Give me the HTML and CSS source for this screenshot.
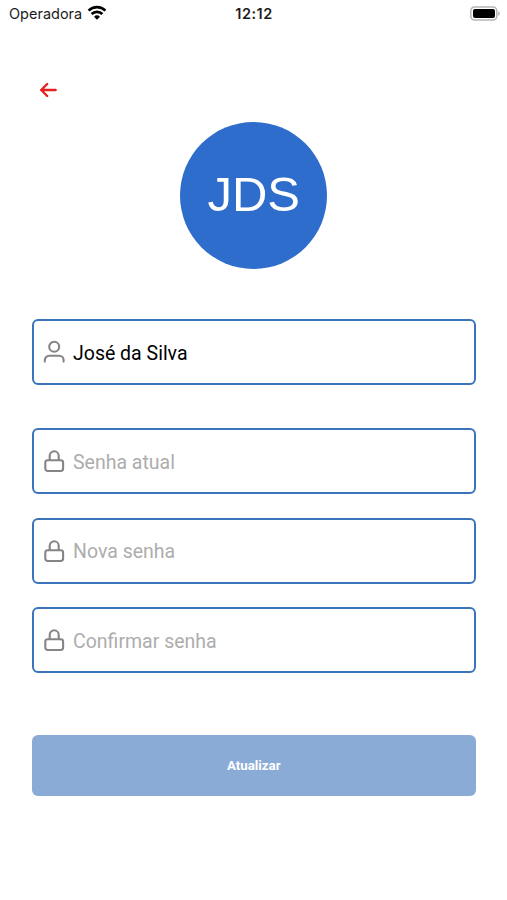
FILE: index.html
```html
<!DOCTYPE html>
<html lang="pt-BR">
  <head>
    <meta charset="UTF-8" />
    <meta name="viewport" content="width=device-width, initial-scale=1.0" />
    <title>Perfil</title>
    <link rel="stylesheet" href="styles.css">
  </head>
  <body>
    <header class="status-bar">
      <div class="carrier">
        <span class="carrier__name">Operadora</span>
        <svg class="wifi" width="20" height="16" viewBox="0 0 20 16" fill="none" stroke="#000" stroke-width="2.7">
          <path d="M1.6 5.6a12 12 0 0 1 16.8 0" />
          <path d="M4.6 9a7.7 7.7 0 0 1 10.8 0" />
          <path d="M10 14.7 7 11.8a4.3 4.3 0 0 1 6 0z" fill="#000" stroke="none" />
        </svg>
      </div>
      <span class="time">12:12</span>
      <svg class="battery" width="32" height="16" viewBox="0 0 32 16">
        <rect x="1.8" y="1" width="26" height="13" rx="3.8" fill="#fff" stroke="#b5b5b5" stroke-width="1.5" />
        <rect x="4" y="3" width="22" height="9" rx="2" fill="#000" />
        <path d="M29.2 5.2c2.2.8 2.2 3.8 0 4.6z" fill="#b5b5b5" />
      </svg>
    </header>

    <main class="container">
      <a class="back" href="#" aria-label="Voltar">
        <svg width="18" height="16" viewBox="0 0 18 16" fill="none" stroke="#e5201e" stroke-width="2.4" stroke-linecap="round" stroke-linejoin="round">
          <path d="M16.6 8H2.2M8.2 2 2.2 8l6 6" />
        </svg>
      </a>

      <div class="avatar">JDS</div>

      <form class="profile-form" onsubmit="return false;">
        <label class="field field--name">
          <svg class="field__icon" width="24" height="24" viewBox="0 0 24 24">
            <circle cx="12.2" cy="6.7" r="5" />
            <path d="M2.8 21.6v-1.4a4.5 4.5 0 0 1 4.5-4.5h9.8a4.5 4.5 0 0 1 4.5 4.5v1.4" />
          </svg>
          <input type="text" value="José da Silva" />
        </label>
        <label class="field">
          <svg class="field__icon" width="24" height="24" viewBox="0 0 24 24">
            <rect x="3.3" y="11.3" width="17.8" height="10.7" rx="2.4" />
            <path d="M7.7 11V6.8a4.5 4.5 0 0 1 9 0V11" />
          </svg>
          <input type="password" placeholder="Senha atual" />
        </label>
        <label class="field">
          <svg class="field__icon" width="24" height="24" viewBox="0 0 24 24">
            <rect x="3.3" y="11.3" width="17.8" height="10.7" rx="2.4" />
            <path d="M7.7 11V6.8a4.5 4.5 0 0 1 9 0V11" />
          </svg>
          <input type="password" placeholder="Nova senha" />
        </label>
        <label class="field">
          <svg class="field__icon" width="24" height="24" viewBox="0 0 24 24">
            <rect x="3.3" y="11.3" width="17.8" height="10.7" rx="2.4" />
            <path d="M7.7 11V6.8a4.5 4.5 0 0 1 9 0V11" />
          </svg>
          <input type="password" placeholder="Confirmar senha" />
        </label>
        <button class="submit" type="submit">Atualizar</button>
      </form>
    </main>
  </body>
</html>
```
FILE: styles.css
```css
* {
  box-sizing: border-box;
}
body {
  font-family: Roboto, Arial, sans-serif;
  margin: 0;
  min-height: 900px;
  background: #fff;
}
.status-bar {
  display: grid;
  grid-template-columns: 1fr auto 1fr;
  align-items: center;
  height: 27px;
  padding: 0 6px 0 9px;
  font-family: Inter, sans-serif;
  color: #1c1c1c;
}
.carrier {
  display: flex;
  align-items: center;
  gap: 5px;
}
.carrier__name {
  font-size: 14.5px;
}
.wifi {
  margin-bottom: 2px;
}
.time {
  margin-right: 2px;
  font-size: 14.5px;
  font-weight: 600;
  letter-spacing: 0.5px;
}
.battery {
  justify-self: end;
}
.container {
  padding: 55px 31.5px 0 32px;
}
.back {
  display: block;
  width: 18px;
  height: 16px;
  margin-left: 7px;
}
.back svg {
  display: block;
}
.avatar {
  display: flex;
  justify-content: center;
  align-items: center;
  width: 147px;
  height: 147px;
  margin: 24px auto 0;
  padding-bottom: 3px;
  border-radius: 50%;
  background: #2e6dcc;
  color: #fff;
  font-family: "Liberation Sans", Arial, sans-serif;
  font-size: 49px;
}
.profile-form {
  display: flex;
  flex-direction: column;
  gap: 23.5px;
  margin-top: 50px;
}
.field {
  display: flex;
  align-items: center;
  gap: 7px;
  height: 66px;
  padding: 0 8px;
  border: 2px solid #3b74bb;
  border-radius: 6px;
}
.field--name {
  margin-bottom: 19.5px;
}
.field__icon {
  flex: none;
  fill: none;
  stroke: #858585;
  stroke-width: 2.1;
  stroke-linecap: round;
  stroke-linejoin: round;
}
.field input {
  flex: 1;
  min-width: 0;
  padding: 2px 0 0;
  border: none;
  outline: none;
  background: none;
  color: #000;
  font-family: inherit;
  font-size: 19.5px;
}
.field input::placeholder {
  color: #adadad;
}
.submit {
  height: 61px;
  margin-top: 38.5px;
  border: none;
  border-radius: 6px;
  background: #8babd7;
  color: #fff;
  font-family: inherit;
  font-size: 13.3px;
  font-weight: 700;
}
```
